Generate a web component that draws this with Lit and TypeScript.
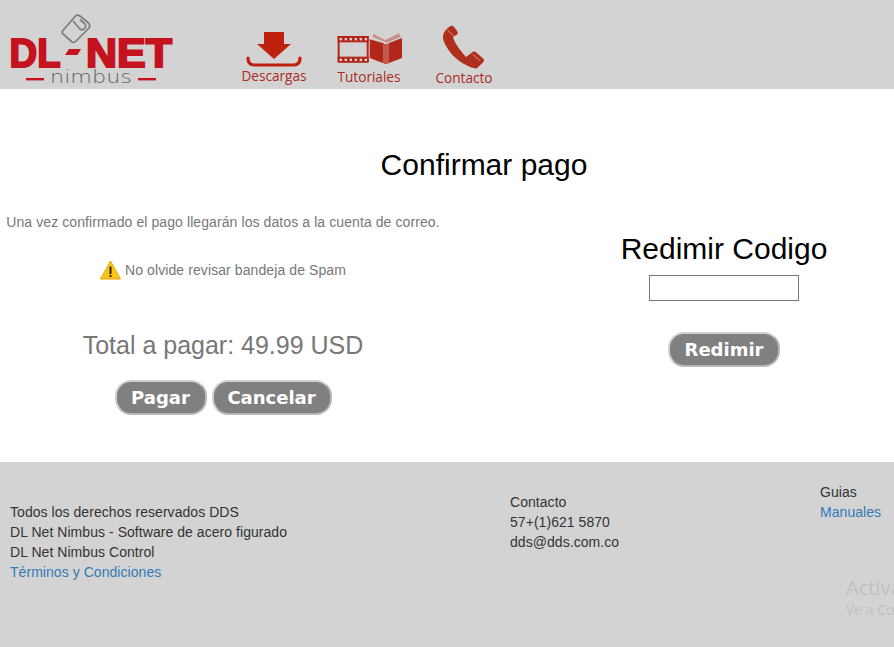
import { LitElement, html, css } from "lit";
import { customElement } from "lit/decorators.js";

@customElement("app-root")
export class AppRoot extends LitElement {
  static styles = css`
    :host { display: block; position: relative; width: 894px; height: 647px; overflow: hidden; background: #fff; font-family: "Liberation Sans", Arial, sans-serif; font-size: 14px; line-height: 20px; color: #333; }
    .header { height: 89px; background: #d3d3d3; display: flex; align-items: flex-start; }
    .logo { width: 226.5px; height: 89px; flex: none; display: block; }
    .nav { width: 95px; flex: none; display: flex; flex-direction: column; align-items: center; color: #a92b1e; font-family: "Open Sans", sans-serif; font-size: 13.6px; line-height: 18px; white-space: nowrap; }
    .nav svg { display: block; }
    .n1 { padding-top: 31px; }
    .n2 { padding-top: 28px; }
    .n3 { padding-top: 22px; }
    .main { height: 373px; box-sizing: border-box; padding-top: 59px; }
    h1 { margin: 0 0 0 74px; text-align: center; font-weight: 400; font-size: 30px; line-height: 34px; color: #000; }
    .cols { display: grid; grid-template-columns: 446px 340px; column-gap: 108px; }
    .left { text-align: center; color: #777; padding-top: 30px; letter-spacing: .09px; }
    .left p { margin: 0; }
    .warn { margin-top: 28px !important; display: flex; justify-content: center; align-items: center; gap: 4px; }
    .warn svg { display: block; }
    .total { margin-top: 51px !important; font-size: 25px; line-height: 28px; letter-spacing: 0; }
    .btns { display: flex; justify-content: center; gap: 5px; margin-top: 21px; }
    button { height: 35px; box-sizing: border-box; padding: 0; background: #808080; color: #fff; border: 2px solid #b8b8b8; border-top-color: #cfcfcf; border-left-color: #cfcfcf; border-radius: 16px; font-family: "DejaVu Sans", Verdana, sans-serif; font-weight: 700; font-size: 18px; line-height: 20px; }
    .pagar { width: 92px; }
    .cancelar { width: 120px; }
    .redimir { width: 112px; }
    .right { text-align: center; display: flex; flex-direction: column; align-items: center; padding-top: 50px; }
    h2 { margin: 0; font-weight: 400; font-size: 30px; line-height: 34px; color: #000; }
    input { display: block; margin: 9px 0 31px; width: 150px; height: 26px; box-sizing: border-box; border: 1px solid #767676; background: #fff; padding: 0; }
    .footer { height: 185px; background: #d3d3d3; display: flex; align-items: flex-start; letter-spacing: .05px; }
    .f1 { width: 510px; box-sizing: border-box; padding: 40px 0 0 10px; }
    .f2 { width: 310px; padding-top: 30px; }
    .f3 { padding-top: 20px; }
    .footer div div { white-space: nowrap; }
    a { color: #337ab7; text-decoration: none; }
    .wm { position: absolute; left: 846px; top: 574px; color: #c1c1c1; font-family: "Open Sans", sans-serif; white-space: nowrap; }
    .wm1 { font-size: 20px; line-height: 27px; }
    .wm2 { font-size: 14px; line-height: 20px; margin-top: -1px; }
  `;

  render() {
    return html`
      <div class="header">
        <svg class="logo" viewBox="0 0 226.5 89" aria-label="DL-NET nimbus">
          <g fill="none" stroke="#7d7d7d" stroke-width="1.7" stroke-linejoin="round" stroke-linecap="round">
            <path d="M62.5 31 L75 16.5 C76.5 15 78.5 15 80 16 L88.5 23 C90 24.5 90 26.5 89 28 L75.5 41.5 C74.5 42.5 73 42.5 72 42 L62.5 33.5 C62 33 62 32 62.5 31 Z"/>
            <path d="M73.5 21.5 L79.5 28.5 C81 30 83 30 84.5 28.5 C86 27 86 25 84.5 23.5 L80.5 20"/>
          </g>
          <text x="9.5" y="66.5" font-family="Liberation Sans, sans-serif" font-weight="700" font-size="40" fill="#c4121f" stroke="#c4121f" stroke-width="2" textLength="51" lengthAdjust="spacingAndGlyphs">DL</text>
          <polygon points="69,49 81,49 77.5,55 65,55" fill="#c4121f"/>
          <text x="86" y="66.5" font-family="Liberation Sans, sans-serif" font-weight="700" font-size="40" fill="#c4121f" stroke="#c4121f" stroke-width="2" textLength="86" lengthAdjust="spacingAndGlyphs">NET</text>
          <rect x="26" y="78" width="18" height="2.4" fill="#c4121f"/>
          <rect x="138" y="78" width="18" height="2.4" fill="#c4121f"/>
          <text x="50" y="83" font-family="DejaVu Sans, sans-serif" font-weight="200" font-size="17" fill="#5f5f5f" textLength="82" lengthAdjust="spacingAndGlyphs">nimbus</text>
        </svg>
        <div class="nav n1">
          <svg width="56" height="36" viewBox="0 0 56 36">
            <polygon points="18,1 38,1 38,13 45,13 28,28 11,13 18,13" fill="#c0210f"/>
            <path d="M2 27 C2 31 3.5 34 8 34 L48 34 C52.5 34 54 31 54 27" fill="none" stroke="#c0210f" stroke-width="3.2" stroke-linecap="round"/>
          </svg>
          <span>Descargas</span>
        </div>
        <div class="nav n2">
          <svg width="68" height="40" viewBox="0 0 204 120">
            <rect x="11" y="27" width="87" height="73" fill="none" stroke="#b3261a" stroke-width="6"/>
            <rect x="8" y="24" width="93" height="19" fill="#b3261a"/>
            <rect x="8" y="86" width="93" height="18" fill="#b3261a"/>
            <g fill="#e4d2cd">
              <rect x="14" y="30" width="7" height="7"/><rect x="29" y="30" width="7" height="7"/><rect x="44" y="30" width="7" height="7"/><rect x="59" y="30" width="7" height="7"/><rect x="74" y="30" width="7" height="7"/><rect x="89" y="30" width="7" height="7"/>
              <rect x="14" y="92" width="7" height="7"/><rect x="29" y="92" width="7" height="7"/><rect x="44" y="92" width="7" height="7"/><rect x="59" y="92" width="7" height="7"/><rect x="74" y="92" width="7" height="7"/><rect x="89" y="92" width="7" height="7"/>
            </g>
            <path d="M104 34 L146 46 L146 106 L104 90 Z" fill="#b3261a"/>
            <path d="M160 46 L201 30 L201 90 L160 106 Z" fill="#b3261a"/>
            <path d="M147 48 L159 48 L159 108 L147 108 Z" fill="#c4584a"/>
            <path d="M112 26 L116 18 L150 36 L192 16 L197 26 L155 44 Z" fill="#c98f86"/>
          </svg>
          <span>Tutoriales</span>
        </div>
        <div class="nav n3">
          <svg width="52" height="47" viewBox="0 0 156 141">
            <path d="M38 12 C42 10 46 12 49 16 L59 30 C60 33 59 36 56 38 L45 45 C48 58 58 75 84 105 L104 90 C107 88 110 88 113 90 L136 110 C139 113 139 117 136 120 L118 138 C112 141 100 138 86 130 C62 118 40 100 26 75 C15 55 12 45 18 32 C22 24 30 16 38 12 Z" fill="#ad2f1c"/>
            <path d="M28 24 L48 42 M104 97 L126 116" stroke="#dba99f" stroke-width="2.5" fill="none"/>
          </svg>
          <span>Contacto</span>
        </div>
      </div>
      <div class="main">
        <h1>Confirmar pago</h1>
        <div class="cols">
          <div class="left">
            <p>Una vez confirmado el pago llegarán los datos a la cuenta de correo.</p>
            <p class="warn">
              <svg width="21" height="20" viewBox="0 0 21 20">
                <path d="M10.5 1 L20.5 19 L.5 19 Z" fill="#fcc419" stroke="#e6a700" stroke-width="1" stroke-linejoin="round"/>
                <rect x="9.5" y="6.5" width="2" height="7.5" fill="#2b2200"/>
                <rect x="9.5" y="15" width="2" height="2" fill="#2b2200"/>
              </svg>
              <span>No olvide revisar bandeja de Spam</span>
            </p>
            <p class="total">Total a pagar: 49.99 USD</p>
            <div class="btns">
              <button class="pagar">Pagar</button>
              <button class="cancelar">Cancelar</button>
            </div>
          </div>
          <div class="right">
            <h2>Redimir Codigo</h2>
            <input type="text" />
            <button class="redimir">Redimir</button>
          </div>
        </div>
      </div>
      <div class="footer">
        <div class="f1">
          <div>Todos los derechos reservados DDS</div>
          <div>DL Net Nimbus - Software de acero figurado</div>
          <div>DL Net Nimbus Control</div>
          <div><a href="#">Términos y Condiciones</a></div>
        </div>
        <div class="f2">
          <div>Contacto</div>
          <div>57+(1)621 5870</div>
          <div>dds@dds.com.co</div>
        </div>
        <div class="f3">
          <div>Guias</div>
          <div><a href="#">Manuales</a></div>
        </div>
      </div>
      <div class="wm">
        <div class="wm1">Activar Windows</div>
        <div class="wm2">Ve a Configuración para activar Windows.</div>
      </div>
    `;
  }
}
